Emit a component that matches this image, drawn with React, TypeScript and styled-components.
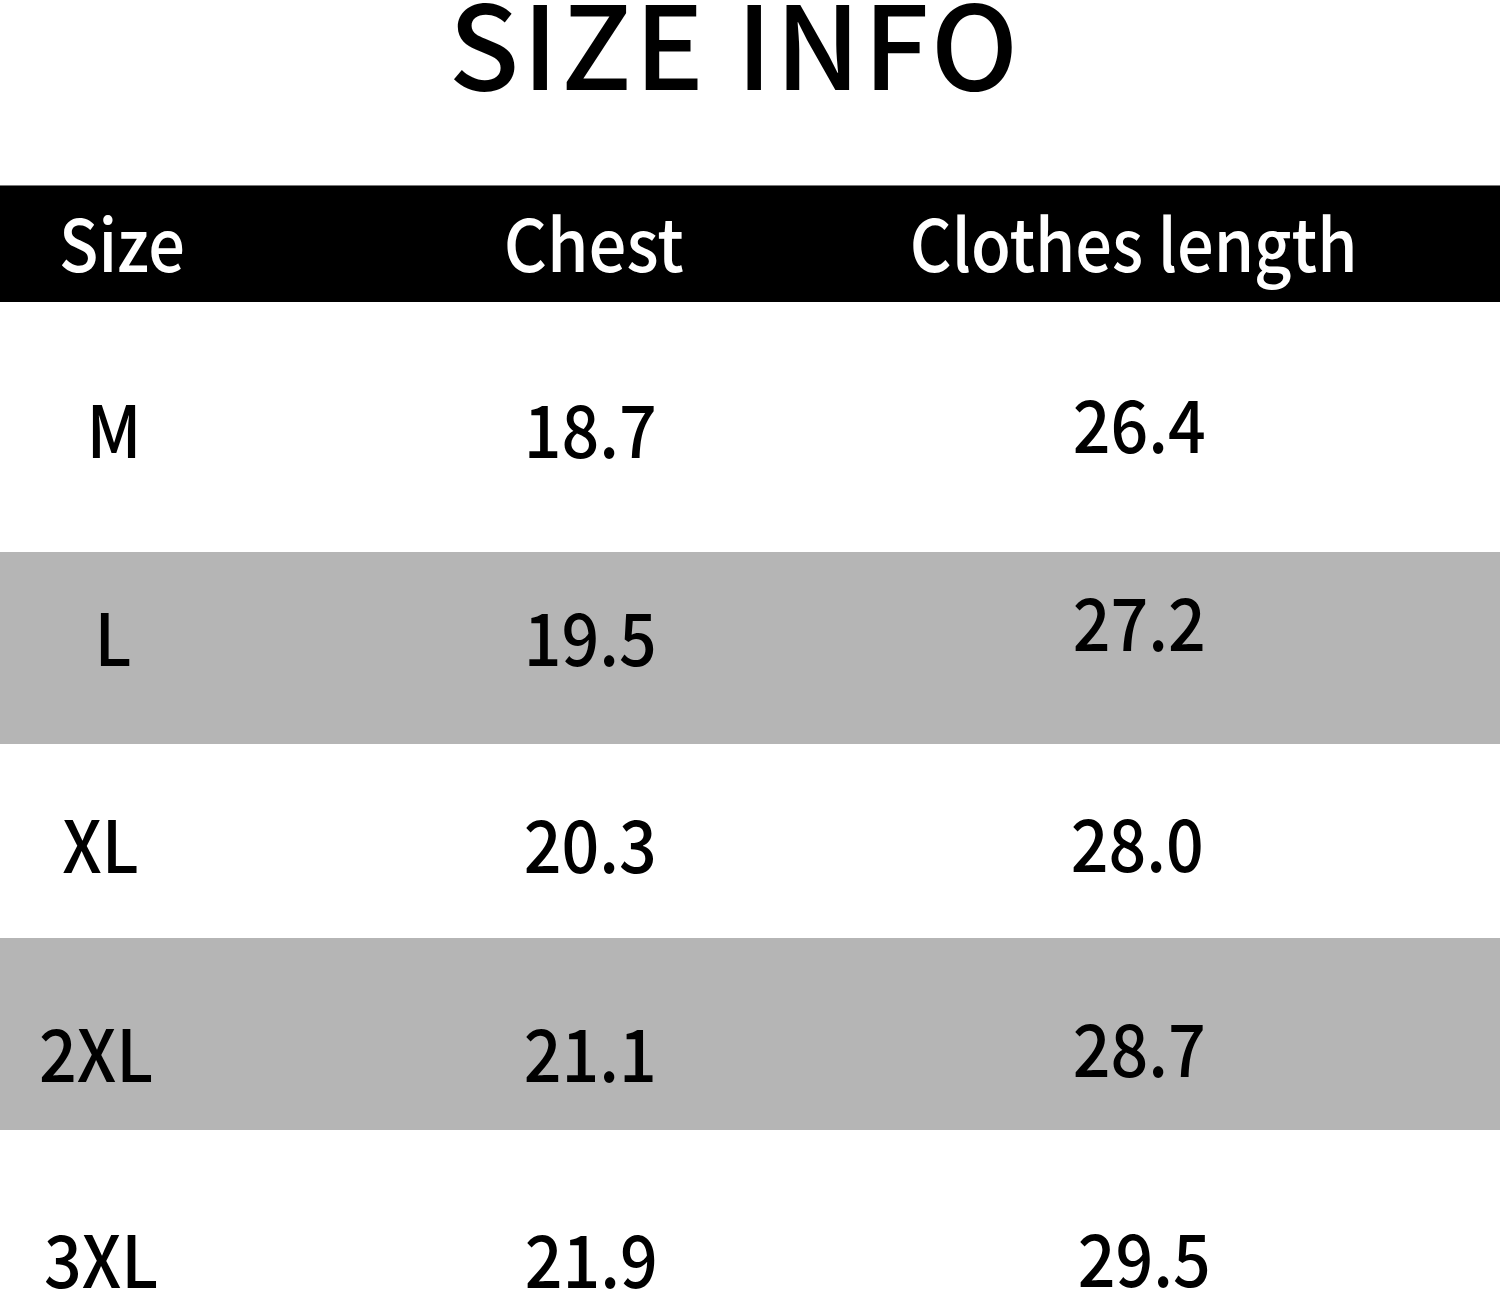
import React from "react";
import styled, { createGlobalStyle } from "styled-components";

const Global = createGlobalStyle`
  html, body { margin: 0; padding: 0; background: #fff; }
  body { font-family: "Noto Sans CJK SC", "Noto Sans", sans-serif; }
`;

const Page = styled.div`
  width: 1500px;
  height: 1291px;
  overflow: hidden;
  background: #fff;
  display: flex;
  flex-direction: column;
`;

const Title = styled.h1`
  margin: 0;
  height: 185px;
  flex: none;
  padding-right: 30px;
  text-align: center;
  font-size: 116px;
  line-height: 0.68;
  font-weight: 500;
  color: #000;
  letter-spacing: 3px;
`;

const cols = "244px 700px 380px 1fr";

const HeaderRow = styled.div`
  display: grid;
  grid-template-columns: ${cols};
  height: 117px;
  flex: none;
  padding-bottom: 6px;
  background: #000;
  border-top: 1px solid #777;
  box-sizing: border-box;
`;

const HeadCell = styled.div`
  display: flex;
  align-items: center;
  justify-content: center;
  color: #fff;
  font-size: 72px;
  font-weight: 500;
  line-height: 1;
  white-space: nowrap;
`;

const HeadText = styled.span<{ $sx?: number }>`
  display: inline-block;
  transform: scaleX(${(p) => p.$sx ?? 0.9});
`;

const Row = styled.div<{ $shade: boolean; $h: number }>`
  display: grid;
  grid-template-columns: ${cols};
  height: ${(p) => p.$h}px;
  flex: none;
  background: ${(p) => (p.$shade ? "#b5b5b5" : "#fff")};
`;

const Cell = styled.div`
  display: flex;
  align-items: center;
  justify-content: center;
  color: #000;
  font-size: 72px;
  font-weight: 500;
  line-height: 1;
  white-space: nowrap;
`;

const CellText = styled.span<{ $dx: number; $dy: number }>`
  display: inline-block;
  transform: translate(${(p) => p.$dx}px, ${(p) => p.$dy}px) scaleX(0.92);
`;

type C = [string, number, number];
const rows: { h: number; shade: boolean; cells: C[] }[] = [
  { h: 250, shade: false, cells: [["M", -8, 0], ["18.7", -4, 0], ["26.4", 5, -5]] },
  { h: 192, shade: true, cells: [["L", -9, -13], ["19.5", -4, -13], ["27.2", 5, -28]] },
  { h: 194, shade: false, cells: [["XL", -21, 1], ["20.3", -4, 1], ["28.0", 3, 0]] },
  { h: 192, shade: true, cells: [["2XL", -26, 17], ["21.1", -4, 17], ["28.7", 5, 12]] },
  { h: 161, shade: false, cells: [["3XL", -21, 46], ["21.9", -3, 46], ["29.5", 10, 45]] },
];

export default function App() {
  return (
    <>
      <Global />
      <Page>
        <Title>SIZE INFO</Title>
        <HeaderRow>
          <HeadCell><HeadText>Size</HeadText></HeadCell>
          <HeadCell><HeadText $sx={0.93}>Chest</HeadText></HeadCell>
          <HeadCell><HeadText>Clothes length</HeadText></HeadCell>
        </HeaderRow>
        {rows.map((r, i) => (
          <Row key={i} $shade={r.shade} $h={r.h}>
            {r.cells.map(([t, dx, dy], j) => (
              <Cell key={j}>
                <CellText $dx={dx} $dy={dy}>{t}</CellText>
              </Cell>
            ))}
          </Row>
        ))}
      </Page>
    </>
  );
}
